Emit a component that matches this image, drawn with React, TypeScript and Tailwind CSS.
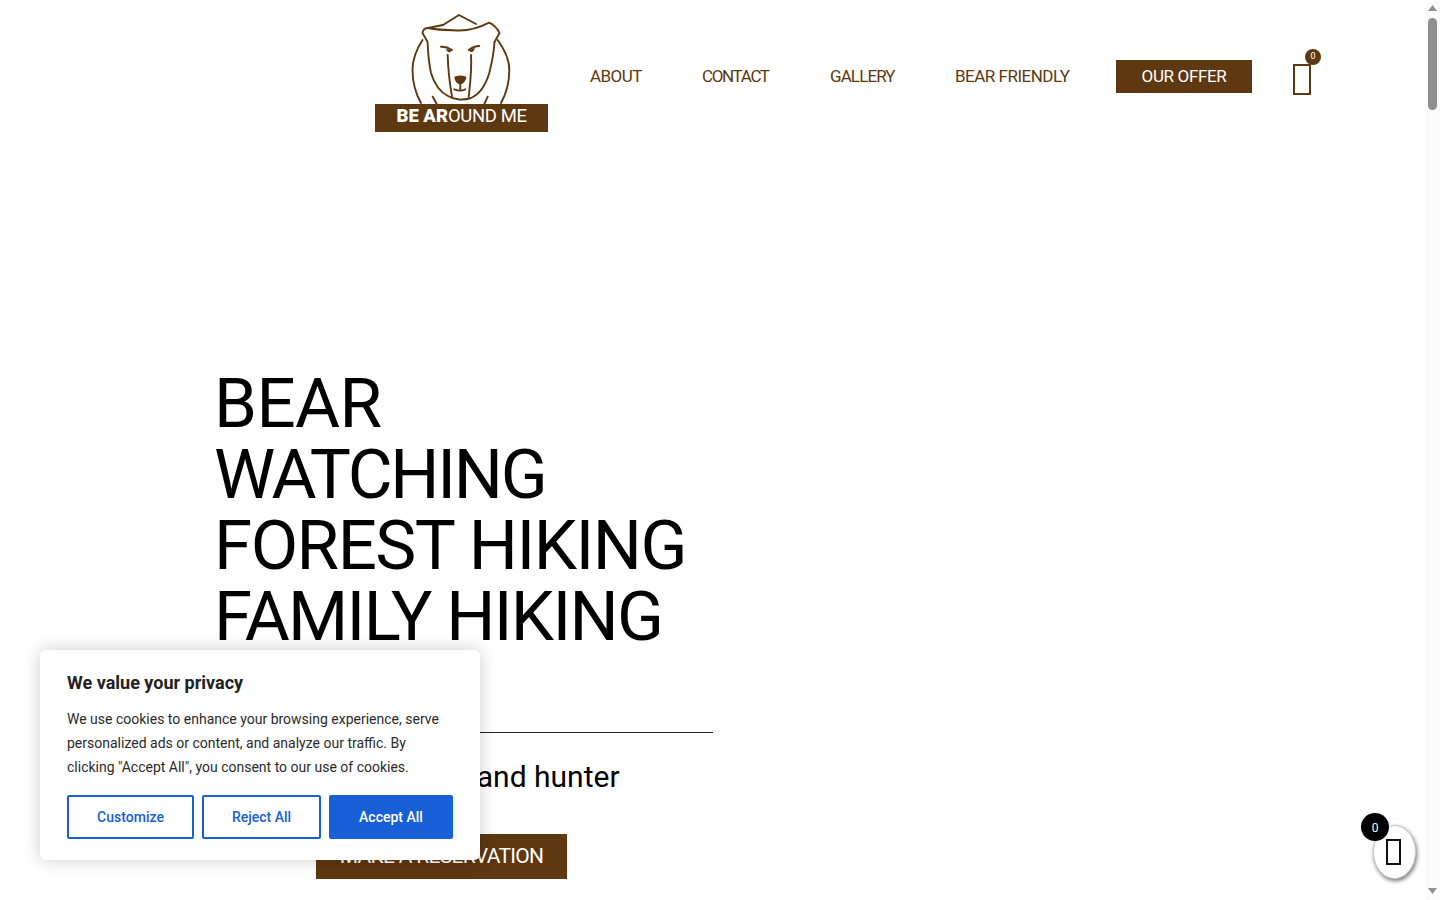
const display = { fontFamily: '"Roboto", "Liberation Sans", sans-serif' };

function Logo() {
  return (
    <div className="relative w-[174px] h-[132px] shrink-0">
      <svg viewBox="0 0 174 132" width="174" height="132" fill="none" stroke="#5e3811" strokeWidth="1.9" strokeLinecap="round" strokeLinejoin="round" className="block">
        <path d="M69 25 L85 15 L102 24" />
        <path d="M54 28 C62 30 73 30 85 30.5 C97 30.5 107 27 115 22.7 C119 24 124 29 125.5 33 L120.5 42" />
        <path d="M54 28 C50 28 49 30 48.5 33 L53.6 42 C54 52 55 64 57 73 C60 83 66 92 74 96 C80 100 90 100.5 97 98 C106 94 112 84 115.3 73 C118 62 120 52 120.5 42" />
        <path d="M69 25 L54 28" />
        <path d="M48.5 40 C42 50 38.5 60 38.5 70 C38.5 82 42 94 47 103" />
        <path d="M123.7 40 C131 50 135.3 60 135.3 70 C135.3 82 132 94 127 103" />
        <path d="M73.7 55 C74 70 76 85 78 96.7" />
        <path d="M97 55 C98 70 96 85 94.7 96.7" />
        <path d="M58.7 96.7 L62.7 104" />
        <path d="M113.7 96.7 L110.3 104" />
        <path d="M67 46.7 C71 46.5 75 48 78 50" />
        <path d="M105.3 46 C101 46 97.5 48 94.7 50" />
        <path d="M72 49 C73 53 77 53 78 50Z M95 50 C96 53 100 53 101 48Z" fill="#5e3811" stroke="none" />
        <path d="M81.3 77.3 C84 76.5 89 76.5 91.3 77.3 C91 81 88.5 83.3 86.3 83.3 C84 83.3 81.5 81 81.3 77.3Z" fill="#5e3811" />
        <path d="M86.3 83.3 L86.3 90 M80.3 89.3 C84 91 88 91 91.3 89.3" />
      </svg>
      <div className="absolute left-[1px] top-[104px] w-[173px] h-[28px] pb-[3px] bg-[#5e3811] flex items-center justify-center text-white text-[18.5px] leading-none" style={display}>
        <span className="font-black">BE AR</span>
        <span className="tracking-[-0.4px]">OUND ME</span>
      </div>
    </div>
  );
}

export default function App() {
  return (
    <div className="relative h-[900px] w-full overflow-hidden bg-white" style={display}>
      <header className="flex items-start pl-[374px] pr-[15px] h-[368px]">
        <Logo />
        <nav className="flex items-center h-[33px] mt-[60px] ml-[42px] text-[#5e3811] text-[17px]">
          <a className="w-[52px] whitespace-nowrap tracking-[-0.55px]">ABOUT</a>
          <a className="ml-[60px] w-[68px] whitespace-nowrap tracking-[-1.35px]">CONTACT</a>
          <a className="ml-[60px] w-[65px] whitespace-nowrap tracking-[-0.9px]">GALLERY</a>
          <a className="ml-[60px] w-[115px] whitespace-nowrap tracking-[-0.5px]">BEAR FRIENDLY</a>
          <a className="ml-[46px] w-[136px] h-[33px] bg-[#5e3811] text-white flex items-center justify-center whitespace-nowrap tracking-[-0.35px]">OUR OFFER</a>
          <div className="relative ml-[41px] mt-[6px] w-[18px] h-[31px] border-2 border-[#5e3811]">
            <span className="absolute -top-[17px] left-[10px] w-[16px] h-[16px] rounded-full bg-[#5e3811] text-white text-[9px] flex items-center justify-center">0</span>
          </div>
        </nav>
      </header>

      <main className="pl-[216px] w-[713px] box-content">
        <h1 className="-ml-[2px] text-[69px] leading-[71px] text-black font-normal w-[499px] whitespace-nowrap">
          <div className="tracking-[-0.6px]">BEAR</div>
          <div className="tracking-[-2.3px]">WATCHING</div>
          <div className="tracking-[-1.5px]">FOREST HIKING</div>
          <div className="tracking-[-1.7px]">FAMILY HIKING</div>
        </h1>
        <div className="w-[497px] h-px bg-[#222222] mt-[80px]" />
        <p className="w-[497px] pr-[5px] text-center text-[30px] leading-[36px] text-black mt-[26px]">With a guide and hunter</p>
        <a className="mt-[39px] ml-[100px] w-[251px] h-[45px] pt-[1px] bg-[#5e3811] text-white text-[21px] tracking-[-0.7px] flex items-center justify-center whitespace-nowrap">MAKE A RESERVATION</a>
      </main>

      <section className="absolute left-[40px] top-[650px] w-[440px] h-[210px] bg-white rounded-[6px] shadow-[0_0_18px_rgba(0,0,0,0.2)] pt-[20px] px-[27px]" style={{ fontFamily: 'Roboto, sans-serif' }}>
        <h2 className="text-[18px] leading-[26px] font-bold text-[#212121]">We value your privacy</h2>
        <p className="mt-[11px] text-[14px] leading-[24px] text-[#2b2b2b] whitespace-nowrap">
          We use cookies to enhance your browsing experience, serve<br />
          personalized ads or content, and analyze our traffic. By<br />
          clicking "Accept All", you consent to our use of cookies.
        </p>
        <div className="flex gap-[8px] mt-[16px] text-[14px] font-medium">
          <button className="w-[127px] h-[44px] border-2 border-[#1860d6] rounded-[2px] text-[#1860d6]">Customize</button>
          <button className="w-[119px] h-[44px] border-2 border-[#1860d6] rounded-[2px] text-[#1860d6]">Reject All</button>
          <button className="w-[124px] h-[44px] bg-[#1860d6] rounded-[2px] text-white">Accept All</button>
        </div>
      </section>

      <div className="absolute left-[1373px] top-[825px] w-[43px] h-[54px] pr-[2px] rounded-[50%] bg-white border border-[#c8c8c8] shadow-[1px_2px_4px_rgba(0,0,0,0.55)] flex items-center justify-center">
        <span className="block w-[15px] h-[26px] border-2 border-[#111111]" />
      </div>
      <div className="absolute left-[1361px] top-[813px] w-[28px] h-[28px] pt-[1px] rounded-full bg-black text-white text-[12px] flex items-center justify-center">0</div>

      <div className="absolute right-0 top-0 w-[15px] h-[900px] bg-[#fbfbfb]">
        <svg className="absolute left-[3px] top-[5px]" width="9" height="6" viewBox="0 0 9 6"><path d="M0 6 L4.5 0 L9 6Z" fill="#8f8f8f" /></svg>
        <div className="absolute left-[3px] top-[18px] w-[9px] h-[92px] rounded-[5px] bg-[#8f8f8f]" />
        <svg className="absolute left-[3px] top-[888px]" width="9" height="6" viewBox="0 0 9 6"><path d="M0 0 L9 0 L4.5 6Z" fill="#8f8f8f" /></svg>
      </div>
    </div>
  );
}
